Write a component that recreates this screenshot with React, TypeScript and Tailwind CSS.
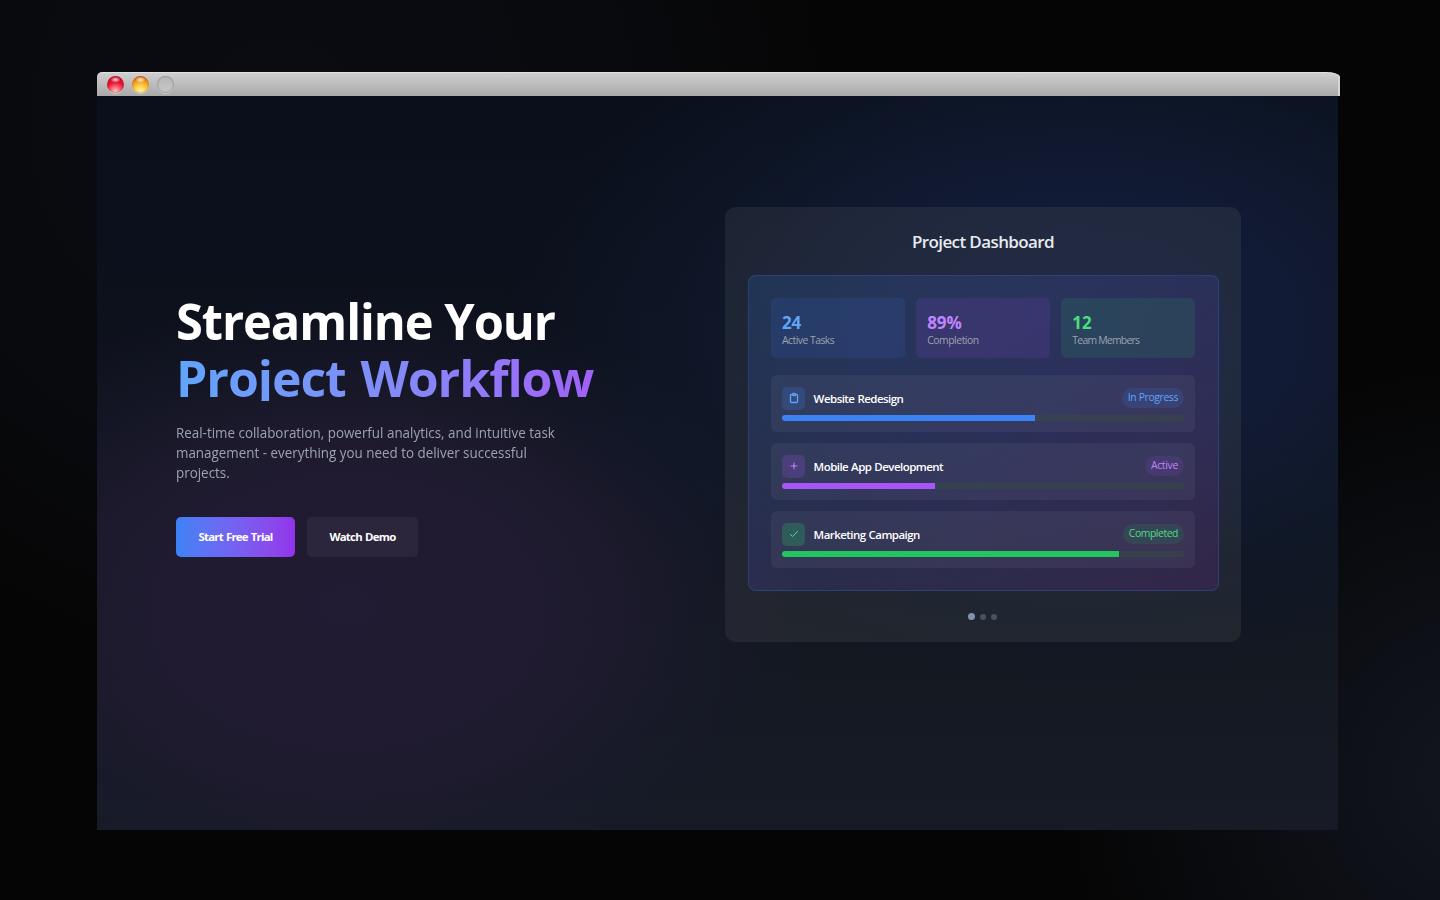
import React from "react";

type Stat = { value: string; label: string; box: string; color: string; tracking: string };
type Task = {
  name: string;
  status: string;
  icon: React.ReactNode;
  iconBox: string;
  badge: string;
  fill: string;
  progress: number;
};

const stats: Stat[] = [
  { value: "24", label: "Active Tasks", box: "bg-[#3b72e6]/13", color: "text-[#60a5fa]", tracking: "tracking-[-0.52px]" },
  { value: "89%", label: "Completion", box: "bg-[#a855f7]/12", color: "text-[#c084fc]", tracking: "tracking-[-0.46px]" },
  { value: "12", label: "Team Members", box: "bg-[#2f9e5e]/17", color: "text-[#4ade80]", tracking: "tracking-[-0.75px]" },
];

const svgProps = {
  width: 12,
  height: 12,
  viewBox: "0 0 24 24",
  fill: "none",
  stroke: "currentColor",
  strokeLinecap: "round" as const,
  strokeLinejoin: "round" as const,
};

const tasks: Task[] = [
  {
    name: "Website Redesign",
    status: "In Progress",
    icon: (
      <svg {...svgProps} strokeWidth={2.6}>
        <path d="M9 5H7a2 2 0 00-2 2v12a2 2 0 002 2h10a2 2 0 002-2V7a2 2 0 00-2-2h-2M9 5a2 2 0 002 2h2a2 2 0 002-2M9 5a2 2 0 012-2h2a2 2 0 012 2" />
      </svg>
    ),
    iconBox: "bg-[#3b82f6]/20 text-[#60a5fa]",
    badge: "bg-[#3b82f6]/15 text-[#60a5fa] tracking-[-0.38px]",
    fill: "bg-[#3b82f6]",
    progress: 63,
  },
  {
    name: "Mobile App Development",
    status: "Active",
    icon: (
      <svg {...svgProps} strokeWidth={2}>
        <path d="M12 6v6m0 0v6m0-6h6m-6 0H6" />
      </svg>
    ),
    iconBox: "bg-[#a855f7]/20 text-[#c084fc]",
    badge: "bg-[#a855f7]/12 text-[#c084fc] tracking-[-0.3px]",
    fill: "bg-[#a855f7]",
    progress: 38,
  },
  {
    name: "Marketing Campaign",
    status: "Completed",
    icon: (
      <svg {...svgProps} strokeWidth={2}>
        <path d="M5 13l4 4L19 7" />
      </svg>
    ),
    iconBox: "bg-[#22c55e]/25 text-[#4ade80]",
    badge: "bg-[#22c55e]/12 text-[#4ade80] tracking-[-0.44px]",
    fill: "bg-[#22c55e]",
    progress: 84,
  },
];

function TitleBar() {
  return (
    <div className="flex h-6 w-[1243px] items-center gap-2 rounded-tl-[5px] rounded-tr-[14px_5px] border-r-2 border-t border-r-[#d6d6d6] border-t-[#e2e2e2] bg-linear-to-b from-[#cfcfcf] to-[#a9a9a9] pl-[10px]">
      <span className="size-[17px] rounded-full bg-[radial-gradient(ellipse_5px_3px_at_50%_22%,#ffffffdd_0%,transparent_100%),radial-gradient(circle_at_50%_90%,#ffc4c4_0%,#f4707c_25%,#ec1230_52%,#c90c22_82%,#8c2a34_100%)] shadow-[inset_0_0_1px_#7a3a40,0_1px_0_#d0d0d0]" />
      <span className="size-[17px] rounded-full bg-[radial-gradient(ellipse_5px_3px_at_50%_22%,#ffffffdd_0%,transparent_100%),radial-gradient(circle_at_50%_90%,#fff3a0_0%,#fdd75c_28%,#f5a81f_54%,#dc6412_82%,#9a4c20_100%)] shadow-[inset_0_0_1px_#8a5530,0_1px_0_#d0d0d0]" />
      <span className="size-[17px] rounded-full bg-linear-to-b from-[#b6b6b6] to-[#c9c9c9] shadow-[inset_0_0_2px_#6e6e6e,0_1px_0_#cfcfcf]" />
    </div>
  );
}

function Hero() {
  return (
    <section className="w-[440px] pt-[196px]">
      <h1 className="whitespace-nowrap text-[51px] font-bold leading-[56.5px] tracking-[-1.1px] text-white">
        <span className="block origin-left scale-x-[0.957]">Streamline Your</span>
        <span className="block h-[52.5px] w-[430px] origin-left scale-x-[0.98] bg-linear-to-r from-[#60a5fa] via-[#818cf8] to-[#a060f8] bg-clip-text text-transparent [word-spacing:3px]">
          Project Workflow
        </span>
      </h1>
      <p className="mt-[21.8px] origin-left scale-x-[0.937] whitespace-nowrap text-[14.3px] leading-[20.3px] text-[#9ca3af]">
        Real-time collaboration, powerful analytics, and intuitive task
        <br />
        management - everything you need to deliver successful
        <br />
        projects.
      </p>
      <div className="mt-[33.2px] flex gap-3 text-[11.4px] font-bold text-white">
        <button className="h-10 w-[119px] rounded-[5px] bg-linear-to-r from-[#3b82f6] to-[#9333ea] tracking-[-0.8px] [word-spacing:1px]">
          Start Free Trial
        </button>
        <button className="h-10 w-[111px] rounded-[5px] bg-white/5 tracking-[-0.75px] [word-spacing:1px]">
          Watch Demo
        </button>
      </div>
    </section>
  );
}

function TaskRow({ task }: { task: Task }) {
  return (
    <div className="flex h-[57px] flex-col rounded-[6px] bg-white/5 px-[11.5px] pt-[11.4px]">
      <div className="flex h-[23px] items-center">
        <span className={`flex size-[23px] items-center justify-center rounded-[5px] ${task.iconBox}`}>
          {task.icon}
        </span>
        <span className="ml-[8.6px] text-[11.5px] font-semibold tracking-[-0.54px] text-white [word-spacing:0.5px]">
          {task.name}
        </span>
        <span
          className={`ml-auto flex h-5 items-center rounded-full px-[5.5px] text-[10.4px] ${task.badge}`}
        >
          {task.status}
        </span>
      </div>
      <div className="mt-[5.6px] h-[6px] overflow-hidden rounded-full bg-[#374549]/75">
        <div className={`h-full ${task.fill}`} style={{ width: `${task.progress}%` }} />
      </div>
    </div>
  );
}

function Dashboard() {
  return (
    <section className="mt-[111px] flex h-[435px] w-[516px] flex-col items-center rounded-[11px] bg-[#a8a8a0]/10">
      <h2 className="mt-[23px] text-[17px] font-semibold leading-6 tracking-[-0.6px] text-[#e8eaef]">Project Dashboard</h2>
      <div className="mt-[21px] flex h-[316px] w-[471px] flex-col rounded-[8px] border border-[#3b62c6]/32 bg-linear-to-br from-[#2563a8]/26 via-[#4544a0]/26 to-[#5a2878]/32 pl-[22px] pr-[22.5px] pt-[22.3px]">
        <div className="grid grid-cols-3 gap-[11px]">
          {stats.map((s) => (
            <div key={s.label} className={`h-[60px] rounded-[5px] pl-[11.5px] pt-[15px] ${s.box}`}>
              <div className={`text-[17px] font-bold leading-5 tracking-[-0.1px] ${s.color}`}>{s.value}</div>
              <div className={`text-[10.4px] leading-[14px] text-[#9ca3af] ${s.tracking}`}>{s.label}</div>
            </div>
          ))}
        </div>
        <div className="mt-[17px] flex flex-col gap-[11px]">
          {tasks.map((t) => (
            <TaskRow key={t.name} task={t} />
          ))}
        </div>
      </div>
      <div className="mt-[22px] flex items-center gap-[5px] pr-0.5">
        <span className="size-[7px] rounded-full bg-[#8490b4]" />
        <span className="size-[6px] rounded-full bg-[#4b5162]" />
        <span className="size-[6px] rounded-full bg-[#4b5162]" />
      </div>
    </section>
  );
}

export default function App() {
  return (
    <div className="h-[900px] w-[1440px] overflow-hidden bg-[#050505] bg-[radial-gradient(ellipse_420px_420px_at_1480px_780px,#121620_0%,#12162000_100%),radial-gradient(ellipse_560px_560px_at_280px_120px,#0b0c12_0%,#090a0e_60%,#05050500_100%)] pl-[97px] pt-[72px] font-['Open_Sans','Noto_Sans',sans-serif]">
      <TitleBar />
      <main className="flex h-[734px] w-[1241px] bg-[radial-gradient(ellipse_560px_350px_at_980px_230px,#161f40dd_0%,#131d3acc_40%,#0f1b3077_72%,#0f1b3000_100%),radial-gradient(ellipse_460px_320px_at_250px_510px,#211b33ff_0%,#201b30ee_50%,#1b1a2e77_76%,#181a2c00_100%),linear-gradient(to_bottom,#0a0f1b_0%,#0d111c_35%,#131821_75%,#161b25_100%)] pl-[79px]">
        <Hero />
        <div className="ml-[109px]">
          <Dashboard />
        </div>
      </main>
    </div>
  );
}
